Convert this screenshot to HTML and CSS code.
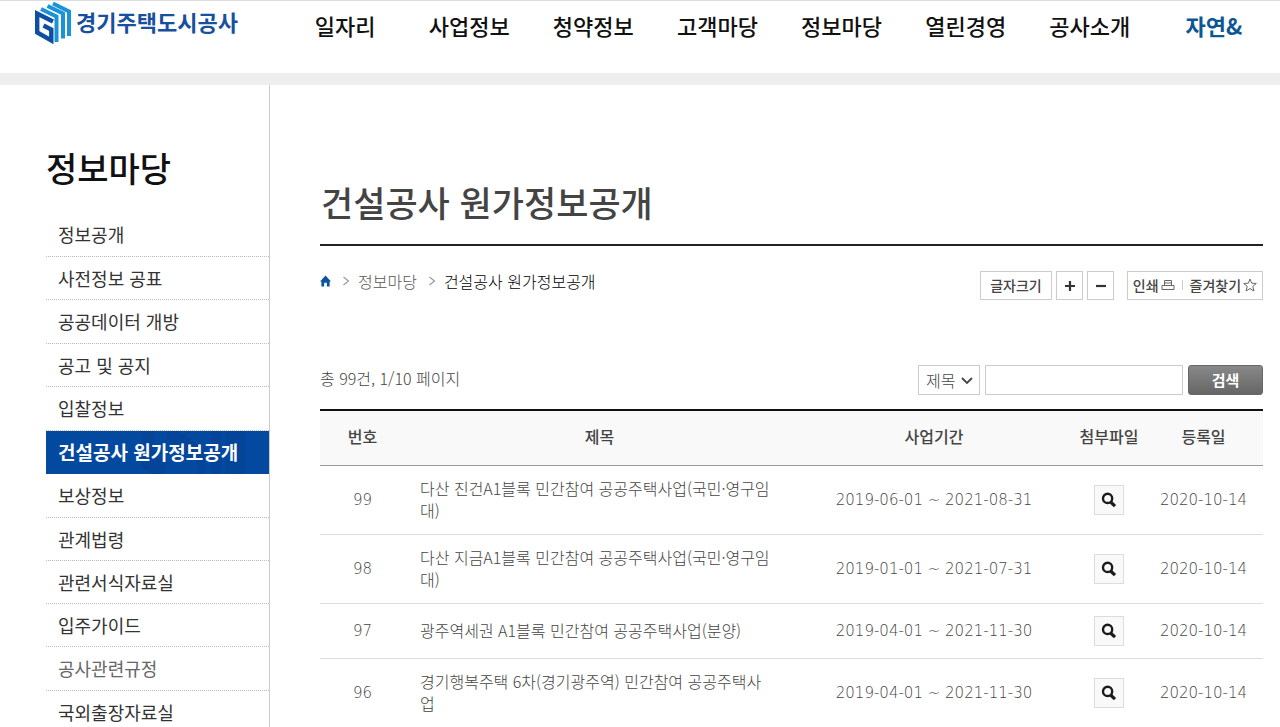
FILE: index.html
```html
<!DOCTYPE html>
<html lang="ko">
<head>
<meta charset="utf-8">
<meta name="viewport" content="width=device-width, initial-scale=1">
<title>건설공사 원가정보공개 - 경기주택도시공사</title>
<link rel="stylesheet" href="styles.css">
</head>
<body>
<svg class="sprite" aria-hidden="true">
  <symbol id="search" viewBox="0 0 16 16">
    <circle cx="6.6" cy="6.4" r="4.6" fill="none" stroke="#1c1c1c" stroke-width="2.4"/>
    <path d="M9.6 10 14 14.2" fill="none" stroke="#1c1c1c" stroke-width="3.2"/>
  </symbol>
  <symbol id="chevron" viewBox="0 0 8 10">
    <path d="M1.5 1 6.5 5 1.5 9" fill="none" stroke="#999" stroke-width="1.2"/>
  </symbol>
</svg>

<header class="header">
  <a class="logo" href="#">
    <svg class="logo-mark" viewBox="0 0 38 44" aria-hidden="true">
      <path fill="none" stroke="#1b93d8" stroke-width="4" d="M7 8 22.500 15.500V41M13.500 5 29 12.500V37.500M19 2.500 35 10.500V35"/>
      <path fill="none" stroke="#0d4fa1" stroke-width="4.400" d="M19 20.500 3.200 12.500V31.500L17.300 39.500V28.500L9.500 24.500"/>
    </svg>
    <span>경기주택도시공사</span>
  </a>
  <nav class="gnb" aria-label="주메뉴">
    <a href="#">일자리</a>
    <a href="#">사업정보</a>
    <a href="#">청약정보</a>
    <a href="#">고객마당</a>
    <a href="#">정보마당</a>
    <a href="#">열린경영</a>
    <a href="#">공사소개</a>
    <a class="brand" href="#">자연&amp;</a>
  </nav>
</header>

<div class="page">
  <aside class="side">
    <h2>정보마당</h2>
    <ul class="lnb">
      <li><a href="#">정보공개</a></li>
      <li><a href="#">사전정보 공표</a></li>
      <li><a href="#">공공데이터 개방</a></li>
      <li><a href="#">공고 및 공지</a></li>
      <li><a href="#">입찰정보</a></li>
      <li class="on">
        <svg class="pattern" viewBox="0 0 128 43" aria-hidden="true">
          <path fill="#063f93" opacity=".55" d="M0 0H14V26L24 32V43H10L0 36ZM26 0H38L64 20V43H56V30L26 8ZM70 0H80V43H70ZM84 0H104V43H84Z"/>
        </svg>
        <a href="#" aria-current="page">건설공사 원가정보공개</a>
      </li>
      <li><a href="#">보상정보</a></li>
      <li><a href="#">관계법령</a></li>
      <li><a href="#">관련서식자료실</a></li>
      <li><a href="#">입주가이드</a></li>
      <li class="soft"><a href="#">공사관련규정</a></li>
      <li><a href="#">국외출장자료실</a></li>
    </ul>
  </aside>

  <main class="main">
    <h1>건설공사 원가정보공개</h1>

    <div class="tools">
      <nav class="crumbs" aria-label="현재 위치">
        <a href="#" aria-label="홈"><svg class="home" viewBox="0 0 12 12" aria-hidden="true"><path fill="#0d53a0" d="M6 0 12 6.500H10.500V12H7.500V8H4.500V12H1.500V6.500H0Z"/></svg></a>
        <svg class="sep" aria-hidden="true"><use href="#chevron"/></svg>
        <a href="#">정보마당</a>
        <svg class="sep" aria-hidden="true"><use href="#chevron"/></svg>
        <strong>건설공사 원가정보공개</strong>
      </nav>
      <div class="utils">
        <span class="box size">글자크기</span>
        <button class="box step" type="button" aria-label="확대"><svg viewBox="0 0 12 12" aria-hidden="true"><path d="M6 1V11M1 6H11" stroke="#333" stroke-width="2.200"/></svg></button>
        <button class="box step" type="button" aria-label="축소"><svg viewBox="0 0 12 12" aria-hidden="true"><path d="M1 6H11" stroke="#333" stroke-width="2.200"/></svg></button>
        <div class="box share">
          <button type="button">인쇄<svg viewBox="0 0 14 14" aria-hidden="true"><path d="M3.500 7.500V2.500H10.500V7.500M3.500 5H10.500M1 11.500V7.500H13V11.500ZM1 11.500H13" fill="none" stroke="#666"/></svg></button>
          <i></i>
          <button type="button">즐겨찾기<svg viewBox="0 0 14 14" aria-hidden="true"><path d="M7 1 8.700 5.200 13.300 5.500 9.800 8.400 10.900 13 7 10.500 3.100 13 4.200 8.400.700 5.500 5.300 5.200Z" fill="none" stroke="#666"/></svg></button>
        </div>
      </div>
    </div>

    <div class="listbar">
      <p>총 99건, 1/10 페이지</p>
      <form class="search">
        <select aria-label="검색 조건"><option>제목</option></select>
        <svg class="arrow" viewBox="0 0 12 8" aria-hidden="true"><path d="M1 1 6 6 11 1" fill="none" stroke="#444" stroke-width="1.800"/></svg>
        <input type="text" aria-label="검색어">
        <button type="submit">검색</button>
      </form>
    </div>

    <table class="board">
      <thead>
        <tr><th class="c-no">번호</th><th>제목</th><th class="c-term">사업기간</th><th class="c-file">첨부파일</th><th class="c-date">등록일</th></tr>
      </thead>
      <tbody>
        <tr>
          <td class="num">99</td>
          <td class="title"><a href="#">다산 진건A1블록 민간참여 공공주택사업(국민·영구임대)</a></td>
          <td class="num">2019-06-01 ~ 2021-08-31</td>
          <td><button class="view" type="button" aria-label="첨부파일 보기"><svg><use href="#search"/></svg></button></td>
          <td class="num">2020-10-14</td>
        </tr>
        <tr>
          <td class="num">98</td>
          <td class="title"><a href="#">다산 지금A1블록 민간참여 공공주택사업(국민·영구임대)</a></td>
          <td class="num">2019-01-01 ~ 2021-07-31</td>
          <td><button class="view" type="button" aria-label="첨부파일 보기"><svg><use href="#search"/></svg></button></td>
          <td class="num">2020-10-14</td>
        </tr>
        <tr>
          <td class="num">97</td>
          <td class="title"><a href="#">광주역세권 A1블록 민간참여 공공주택사업(분양)</a></td>
          <td class="num">2019-04-01 ~ 2021-11-30</td>
          <td><button class="view" type="button" aria-label="첨부파일 보기"><svg><use href="#search"/></svg></button></td>
          <td class="num">2020-10-14</td>
        </tr>
        <tr>
          <td class="num">96</td>
          <td class="title"><a href="#">경기행복주택 6차(경기광주역) 민간참여 공공주택사업</a></td>
          <td class="num">2019-04-01 ~ 2021-11-30</td>
          <td><button class="view" type="button" aria-label="첨부파일 보기"><svg><use href="#search"/></svg></button></td>
          <td class="num">2020-10-14</td>
        </tr>
      </tbody>
    </table>
  </main>
</div>
</body>
</html>
```

FILE: styles.css
```css
* { box-sizing: border-box; }
html { overflow: hidden; height: 100%; }
body {
  margin: 0;
  height: 100%;
  overflow: hidden;
  background: #fff;
  color: #444;
  font-family: "Noto Sans CJK KR", sans-serif;
  font-size: 16px;
  line-height: 22px;
}
a { color: inherit; text-decoration: none; }
h1, h2, p, ul { margin: 0; padding: 0; }
ul { list-style: none; }
button, input, select { font: inherit; color: inherit; margin: 0; padding: 0; }
svg { display: block; flex: none; }
.sprite { position: absolute; width: 0; height: 0; }

/* Header */
.header {
  display: flex;
  height: 85px;
  border-top: 1px solid #ddd;
  border-bottom: 12px solid #eee;
}
.logo {
  display: flex;
  flex: 0 0 283px;
  gap: 4px;
  padding-left: 34px;
  color: #17509f;
  font-size: 22px;
  font-weight: 700;
  line-height: 40px;
}
.logo-mark { width: 38px; height: 44px; }
.gnb {
  display: grid;
  flex: 1;
  grid-template-columns: repeat(8, 1fr);
  padding-right: 4px;
  color: #111;
  font-size: 22px;
  font-weight: 500;
  line-height: 48px;
  text-align: center;
}
.gnb .brand { color: #0d5795; font-weight: 700; }

/* Layout */
.page { display: flex; min-height: calc(100% - 85px); }
.side {
  flex: 0 0 270px;
  padding: 58px 0 0 46px;
  border-right: 1px solid #ccc;
}
.main { flex: 1; min-width: 0; padding: 90px 17px 0 50px; }

/* Side menu */
.side h2 {
  margin-bottom: 20px;
  color: #111;
  font-size: 34px;
  font-weight: 500;
  line-height: 50px;
}
.lnb li {
  position: relative;
  height: 43px;
  padding-left: 12px;
  border-bottom: 1px dotted #bbb;
  color: #333;
  font-size: 18px;
  line-height: 42px;
}
.lnb li:nth-child(odd) { height: 44px; }
.lnb li:nth-child(9) { height: 43px; }
.lnb .on {
  border-bottom-color: #0a4da2;
  background: #0349a0;
  color: #fff;
  font-size: 19px;
  font-weight: 700;
}
.lnb .on a { position: relative; }
.lnb .soft { color: #666; }
.pattern { position: absolute; top: 0; right: 0; width: 128px; height: 43px; }

/* Title */
h1 {
  padding: 0 1px 15px;
  border-bottom: 2px solid #222;
  color: #444;
  font-size: 35px;
  font-weight: 500;
  line-height: 54px;
}

/* Breadcrumb and utilities */
.tools {
  display: flex;
  justify-content: space-between;
  padding-top: 25px;
}
.crumbs {
  display: flex;
  align-items: center;
  height: 20px;
  color: #555;
  font-weight: 300;
}
.crumbs strong { color: #000; font-weight: 300; }
.home { width: 11px; height: 12px; }
.sep { width: 8px; height: 10px; margin: 0 8px 0 11px; }
.utils { display: flex; gap: 4px; color: #444; font-size: 14px; font-weight: 500; }
.box {
  display: flex;
  align-items: center;
  justify-content: center;
  height: 29px;
  padding-bottom: 2px;
  border: 1px solid #ccc;
  background: #fff;
}
.size { width: 72px; }
.step { width: 27px; padding: 0; }
.step svg { width: 12px; height: 12px; }
.share { gap: 7px; width: 136px; margin-left: 9px; }
.share button {
  display: flex;
  align-items: center;
  gap: 2px;
  border: 0;
  background: none;
}
.share svg { width: 14px; height: 14px; }
.share i { width: 1px; height: 10px; background: #ccc; }

/* List bar */
.listbar {
  display: flex;
  justify-content: space-between;
  margin-top: 65px;
  margin-bottom: 14px;
  font-weight: 300;
  line-height: 26px;
}
.search { position: relative; display: flex; gap: 5px; }
.search select {
  width: 62px;
  height: 30px;
  padding-left: 7px;
  border: 1px solid #ccc;
  border-radius: 0;
  appearance: none;
  background: #fff;
}
.search .arrow { position: absolute; top: 12px; left: 43px; width: 12px; height: 8px; pointer-events: none; }
.search input { width: 198px; height: 30px; padding: 0 6px; border: 1px solid #ccc; }
.search button {
  width: 75px;
  height: 30px;
  border: 1px solid #666;
  border-radius: 3px;
  background: linear-gradient(#888, #666);
  color: #fff;
  font-size: 15px;
  font-weight: 700;
}

/* Board */
.board {
  width: 100%;
  border-collapse: separate;
  border-spacing: 0;
  border-top: 2px solid #111;
  table-layout: fixed;
  text-align: center;
}
.board th {
  height: 55px;
  padding: 0 0 4px;
  border-bottom: 1px solid #999;
  background: #f9f9f9;
  color: #444;
  font-weight: 500;
  white-space: nowrap;
}
.c-no { width: 85px; }
.c-term { width: 280px; }
.c-file { width: 70px; }
.c-date { width: 119px; }
.board td { padding: 12px 0; border-bottom: 1px solid #ddd; font-weight: 300; }
.board .title { padding: 11px 21px 13px 15px; text-align: left; word-break: break-all; }
.board .num { font-family: "DejaVu Sans", sans-serif; font-size: 15px; font-weight: 200; }
.view {
  display: flex;
  align-items: center;
  justify-content: center;
  width: 30px;
  height: 30px;
  margin: 0 auto;
  border: 1px solid #ddd;
  background: #f9f9f9;
}
.view svg { width: 16px; height: 16px; }
```
